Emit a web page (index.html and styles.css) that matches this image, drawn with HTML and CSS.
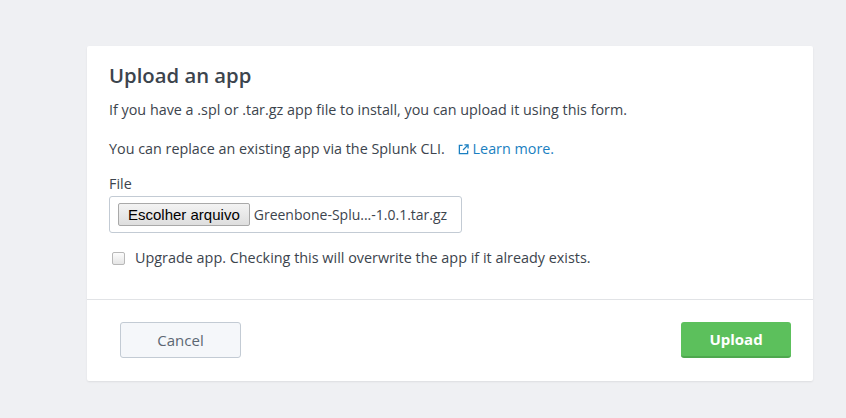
FILE: index.html
```html
<!DOCTYPE html>
<html lang="en">

<head>
  <meta charset="UTF-8" />
  <meta name="viewport" content="width=device-width, initial-scale=1.0" />
  <title>Upload an app</title>
  <link rel="stylesheet" href="styles.css">
</head>

<body>

  <div class="upload-card">
    <div class="card-body">
      <h2>Upload an app</h2>
      <p class="intro">If you have a .spl or .tar.gz app file to install, you can upload it using this form.</p>
      <p class="intro">You can replace an existing app via the Splunk CLI.
        <a class="learn-more" href="#">
          <svg class="ext-icon" viewBox="0 0 12 12" width="11" height="11">
            <path d="M5 1.5H1.5v9h9V7" fill="none" stroke="currentColor" stroke-width="1.4" />
            <path d="M7 1h4v4M11 1L5.5 6.5" fill="none" stroke="currentColor" stroke-width="1.4" />
          </svg>Learn more.</a>
      </p>

      <label class="field-label">File</label>
      <div class="file-field">
        <span class="file-btn">Escolher arquivo</span>
        <span class="file-name">Greenbone-Splu...-1.0.1.tar.gz</span>
      </div>

      <label class="check-row">
        <span class="fake-check"></span>
        Upgrade app. Checking this will overwrite the app if it already exists.
      </label>
    </div>

    <div class="card-footer">
      <button class="btn cancel-btn">Cancel</button>
      <button class="btn upload-btn">Upload</button>
    </div>
  </div>

</body>

</html>
```

FILE: styles.css
```css
body {
  margin: 0;
  font-family: "Open Sans", Lato, sans-serif;
  background-color: #eff0f3;
  color: #3c444d;
  height: 418px;
}

.upload-card {
  margin: 46px 0 0 87px;
  width: 726px;
  height: 335px;
  background-color: white;
  border-radius: 2px;
  box-shadow: 0 1px 2px rgba(0, 0, 0, 0.08);
  display: flex;
  flex-direction: column;
}

.card-body {
  padding: 18px 22px 0;
  height: 235px;
  border-bottom: 1px solid #e1e3e6;
}

h2 {
  margin: 0 0 15px;
  font-size: 20.3px;
  line-height: 22px;
  font-weight: 600;
  color: #3c444d;
}

.intro {
  margin: 0 0 21px;
  font-size: 14.35px;
  line-height: 18px;
}

.learn-more {
  color: #1a7fc1;
  text-decoration: none;
  margin-left: 9px;
}

.ext-icon {
  vertical-align: -1px;
  margin-right: 4px;
}

.field-label {
  display: block;
  font-size: 14.35px;
  line-height: 18px;
  margin-top: -4px;
}

.file-field {
  margin-top: 3px;
  width: 343px;
  height: 35px;
  border: 1px solid #c3cbd4;
  border-radius: 3px;
  display: flex;
  align-items: center;
  padding-left: 8px;
  gap: 4px;
}

.file-btn {
  font-family: Arial, "Liberation Sans", sans-serif;
  font-size: 15px;
  color: #000;
  padding: 2px 9px;
  background: linear-gradient(#f3f3f3, #dedede);
  border: 1px solid #a9a9a9;
  border-radius: 2px;
}

.file-name {
  font-size: 14px;
  color: #3c444d;
}

.check-row {
  display: flex;
  align-items: center;
  gap: 10px;
  margin-top: 16px;
  font-size: 14.4px;
  line-height: 18px;
  padding-left: 3px;
}

.fake-check {
  width: 11px;
  height: 11px;
  border: 1px solid #b8b8b8;
  border-radius: 2px;
  background: linear-gradient(#fcfcfc, #e5e5e5);
}

.card-footer {
  flex: 1;
  display: flex;
  justify-content: space-between;
  align-items: center;
  padding: 0 22px 2px 33px;
}

.btn {
  height: 36px;
  font-family: inherit;
  font-size: 15px;
  border-radius: 3px;
  cursor: pointer;
}

.cancel-btn {
  width: 121px;
  background-color: #f5f7fa;
  border: 1px solid #c3cbd4;
  color: #5c6773;
}

.upload-btn {
  width: 110px;
  background-color: #5cc05c;
  border: none;
  border-bottom: 2px solid #4ea84e;
  color: white;
  font-weight: 700;
}
```
